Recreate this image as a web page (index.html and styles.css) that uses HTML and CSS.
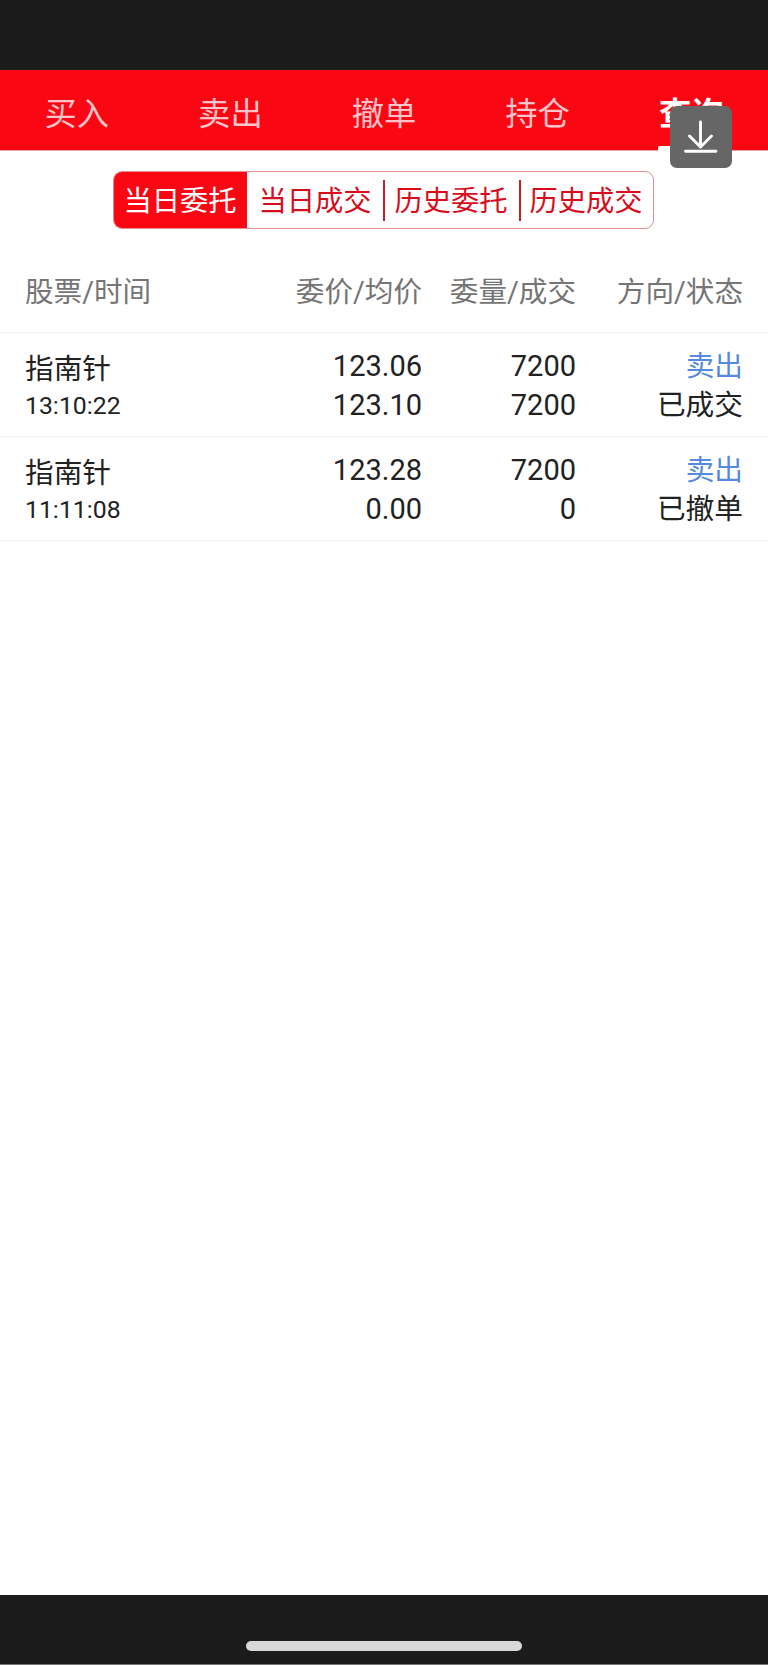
FILE: index.html
```html
<!DOCTYPE html>
<html lang="zh-CN">
<head>
<meta charset="utf-8">
<title>当日委托</title>
<link rel="stylesheet" href="styles.css">
</head>
<body>
<div class="screen">
  <div class="status-bar"></div>
  <nav class="tabs">
    <a class="tab">买入</a>
    <a class="tab">卖出</a>
    <a class="tab">撤单</a>
    <a class="tab">持仓</a>
    <a class="tab tab-active">查询</a>
  </nav>
  <button class="download" aria-label="下载">
    <svg width="62" height="62" viewBox="0 0 62 62" fill="none" stroke="#fff" stroke-width="2.9" stroke-linecap="round" stroke-linejoin="round">
      <path d="M30.5 16v25M19.5 30l11 11 11-11M15.5 45.3h30.5"/>
    </svg>
  </button>
  <main class="content">
    <div class="segments">
      <a class="segment segment-active">当日委托</a>
      <a class="segment">当日成交</a>
      <a class="segment divided">历史委托</a>
      <a class="segment divided">历史成交</a>
    </div>
    <div class="row head">
      <span class="name">股票/时间</span>
      <span>委价/均价</span>
      <span>委量/成交</span>
      <span>方向/状态</span>
    </div>
    <div class="row order">
      <div class="name"><p class="stock">指南针</p><p class="time">13:10:22</p></div>
      <div><p>123.06</p><p>123.10</p></div>
      <div><p>7200</p><p>7200</p></div>
      <div class="state"><p class="sell">卖出</p><p>已成交</p></div>
    </div>
    <div class="row order">
      <div class="name"><p class="stock">指南针</p><p class="time">11:11:08</p></div>
      <div><p>123.28</p><p>0.00</p></div>
      <div><p>7200</p><p>0</p></div>
      <div class="state"><p class="sell">卖出</p><p>已撤单</p></div>
    </div>
  </main>
  <footer class="home-bar"><div class="pill"></div></footer>
</div>
</body>
</html>
```
FILE: styles.css
```css
* { box-sizing: border-box; }
body {
  margin: 0;
  background: #fff;
  color: #222;
  font-family: Roboto, "Noto Sans CJK SC", sans-serif;
}
p { margin: 0; }
.screen {
  position: relative;
  display: flex;
  flex-direction: column;
  width: 768px;
  height: 1665px;
}
.status-bar { height: 70px; background: #1c1c1c; }
.tabs {
  display: grid;
  grid-template-columns: repeat(5, 1fr);
  height: 81px;
  background: #fb0613;
  border-bottom: 1px solid #e8a0a8;
}
.tab {
  position: relative;
  text-align: center;
  font-size: 32.3px;
  line-height: 89px;
  height: 80px;
  color: #ffc4c9;
}
.tab-active { color: #fff; font-weight: 700; }
.tab-active::after {
  content: "";
  position: absolute;
  left: 44px;
  bottom: -1px;
  width: 64px;
  height: 5px;
  border-radius: 2px 2px 0 0;
  background: #fff;
}
.download {
  position: absolute;
  left: 670px;
  top: 106px;
  width: 62px;
  height: 62px;
  padding: 0;
  border: 0;
  border-radius: 7px;
  background: #666;
}
.download svg { display: block; }
.content { flex: 1; }
.segments {
  display: grid;
  grid-template-columns: 133px 136px 136px 1fr;
  width: 541px;
  height: 58px;
  margin: 20px 0 0 113px;
  border: 1px solid #df8d96;
  border-radius: 9px;
  overflow: hidden;
}
.segment {
  position: relative;
  text-align: center;
  font-size: 28.3px;
  line-height: 59px;
  color: #d70d1b;
}
.segment-active { color: #fff; background: #fb0613; }
.segments .segment-active { margin: -1px 0 -1px -1px; line-height: 61px; }
.divided::before {
  content: "";
  position: absolute;
  left: 0;
  top: 8px;
  width: 2px;
  height: 41px;
  background: #c4202c;
}
.row {
  display: grid;
  grid-template-columns: 243px 154px 154px 167px;
  padding: 0 25px;
  border-bottom: 1px solid #efefef;
  text-align: right;
}
.name { text-align: left; }
.head {
  height: 104px;
  font-size: 28.6px;
  line-height: 126px;
  color: #757575;
}
.order {
  height: 104px;
  padding-top: 14px;
  font-size: 29px;
  line-height: 39px;
}
.stock { font-size: 28.7px; line-height: 45px; }
.time { font-size: 24.8px; line-height: 28px; }
.state { font-size: 28.7px; }
.sell { color: #548be0; }
.home-bar {
  height: 70px;
  padding-top: 46px;
  background: #1c1c1c;
  border-bottom: 1px solid #777;
}
.pill {
  width: 276px;
  height: 10px;
  margin-left: 246px;
  border-radius: 5px;
  background: #d8d8d8;
}
```
